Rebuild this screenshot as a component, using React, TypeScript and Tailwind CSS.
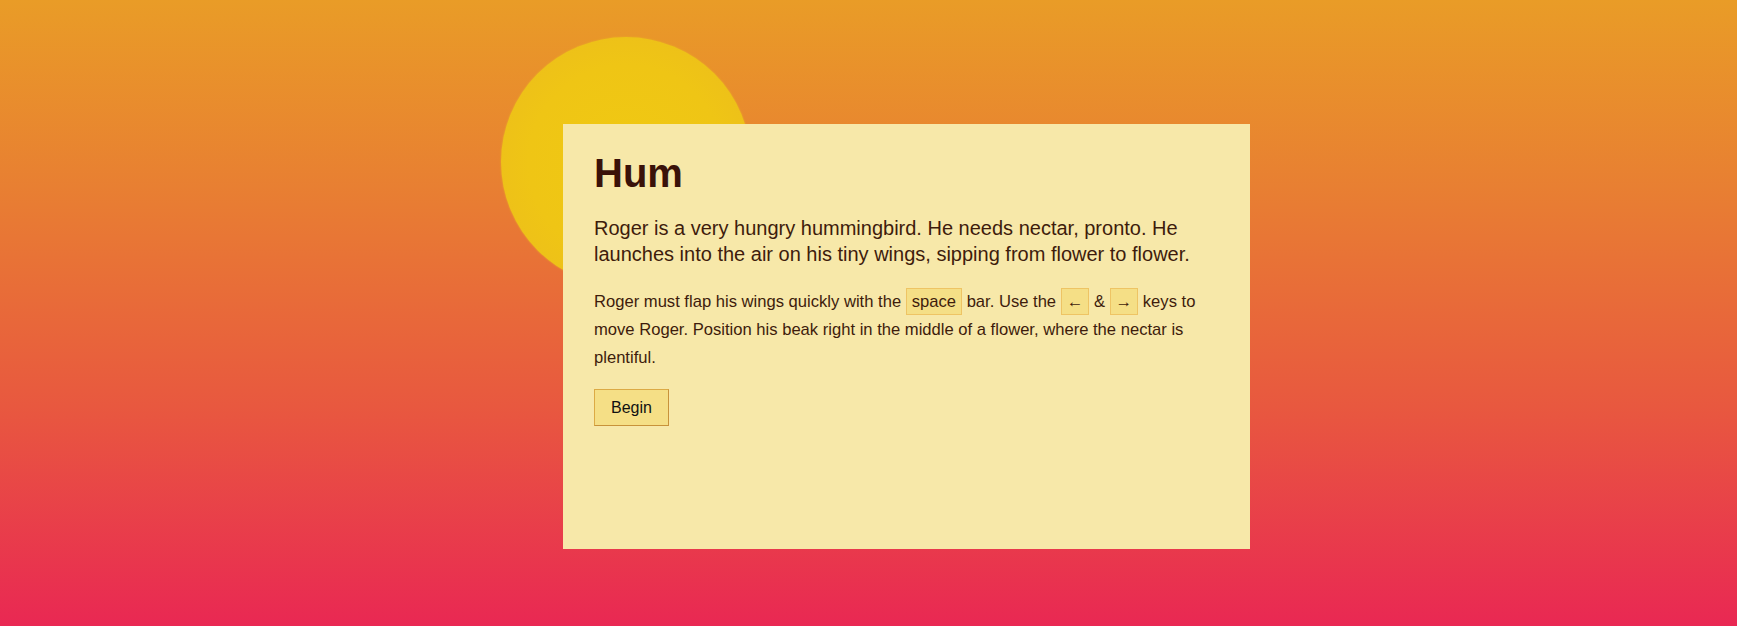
import React from "react";

function Key({ children }: { children: React.ReactNode }) {
  return (
    <kbd className="inline-block rounded-none border border-[#eec464] bg-[#f5df86] px-[5px] py-[3px] leading-[19px] text-[16.6px] text-[#3e1c0c] [font-family:'Liberation_Sans',Arial,sans-serif]">
      {children}
    </kbd>
  );
}

export default function App() {
  return (
    <div className="relative h-[626px] w-[1737px] overflow-hidden bg-[linear-gradient(to_bottom,#e99c27_0%,#e87f32_30%,#e8583f_65%,#e92853_100%)] [font-family:'Liberation_Sans',Arial,sans-serif]">
      <div className="absolute left-[501px] top-[37px] h-[250px] w-[250px] rounded-full bg-[radial-gradient(circle,#f0c912_0%,#efc515_55%,#ecbd1c_90%,#eab324_100%)] shadow-[0_0_2px_#eab324]" />
      <div className="relative ml-[563px] mt-[124px] h-[425px] w-[687px] bg-[#f7e8a9] px-[31px] pt-[24px]">
        <h1 className="text-[40px] font-bold leading-[50px] text-[#3a1209]">Hum</h1>
        <p className="mt-[17px] text-[20px] leading-[26px] text-[#3e1c0c]">
          Roger is a very hungry hummingbird. He needs nectar, pronto. He launches into the air on his tiny wings, sipping from flower to flower.
        </p>
        <p className="mt-[21px] text-[16.6px] leading-[28px] text-[#3e1c0c]">
          Roger must flap his wings quickly with the <Key>space</Key> bar. Use the <Key>←</Key> &amp; <Key>→</Key> keys to move Roger. Position his beak right in the middle of a flower, where the nectar is plentiful.
        </p>
        <button className="mt-[17px] block border border-[#dcaa45] border-b-[#c8923a] border-r-[#c8923a] bg-[#f5df86] px-[16px] py-[8px] text-[16px] leading-[19px] text-[#111111]">
          Begin
        </button>
      </div>
    </div>
  );
}
